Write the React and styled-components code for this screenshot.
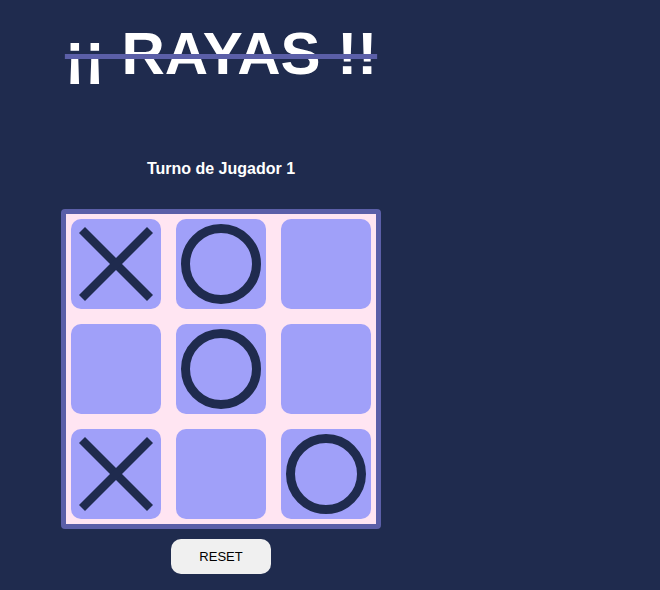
import React, { useState } from 'react'
import styled, { createGlobalStyle } from 'styled-components'

const GlobalStyle = createGlobalStyle`
    html, body {
        margin: 0;
        padding: 0;
        background-color: #1f2b4e;
        font-family: "Liberation Sans", Arial, sans-serif;
    }
`

const initialBoard = ['X', 'O', '', '', 'O', '', 'X', '', 'O']

const Cross = () => (
    <svg width="90" height="90" viewBox="0 0 90 90">
        <line x1="11" y1="11" x2="79" y2="79" stroke="#1f2b4e" strokeWidth="8.5" />
        <line x1="79" y1="11" x2="11" y2="79" stroke="#1f2b4e" strokeWidth="8.5" />
    </svg>
)

const App = () => {
    const [board, setBoard] = useState(initialBoard)

    return (
        <>
            <GlobalStyle />
            <Page>
                <Title>¡¡ RAYAS !!</Title>
                <Turn>Turno de Jugador 1</Turn>
                <Board>
                    {board.map((value, i) => (
                        <Cell key={i}>
                            {value === 'X' && <Cross />}
                            {value === 'O' && <Ring />}
                        </Cell>
                    ))}
                </Board>
                <ResetButton onClick={() => setBoard(Array(9).fill(''))}>RESET</ResetButton>
            </Page>
        </>
    )
}

const Page = styled.div`
    width: 320px;
    margin-left: 61px;
    display: flex;
    flex-direction: column;
    align-items: center;
    min-height: 590px;
`

const Title = styled.h1`
    margin: 24px 0 0 0;
    font-size: 60px;
    line-height: 60px;
    font-weight: bold;
    color: #ffffff;
    white-space: nowrap;
    text-decoration: line-through;
    text-decoration-color: #5b5fa8;
    text-decoration-thickness: 5px;
`

const Turn = styled.h3`
    margin: 75px 0 0 0;
    font-size: 16px;
    line-height: 20px;
    font-weight: bold;
    color: #ffffff;
`

const Board = styled.div`
    margin-top: 30px;
    box-sizing: border-box;
    width: 320px;
    height: 320px;
    padding: 5px;
    border: 5px solid #5b5fa8;
    border-radius: 4px;
    background-color: #ffe5f2;
    display: grid;
    grid-template-columns: repeat(3, 90px);
    grid-template-rows: repeat(3, 90px);
    gap: 15px;
`

const Cell = styled.div`
    width: 90px;
    height: 90px;
    border-radius: 10px;
    background-color: #a0a0f9;
    display: flex;
    justify-content: center;
    align-items: center;
`

const Ring = styled.div`
    box-sizing: border-box;
    width: 80px;
    height: 80px;
    border: 9.5px solid #1f2b4e;
    border-radius: 50%;
`

const ResetButton = styled.button`
    margin-top: 10px;
    width: 100px;
    height: 35px;
    border: none;
    border-radius: 10px;
    background-color: #f0f0f0;
    color: #000000;
    font-family: "Liberation Sans", Arial, sans-serif;
    font-size: 13px;
    cursor: pointer;
`

export default App
